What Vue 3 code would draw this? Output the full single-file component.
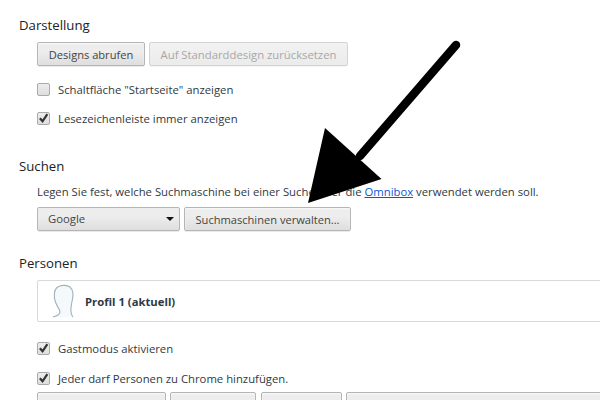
<template>
  <div class="page">
    <section class="sec first">
      <h3>Darstellung</h3>
      <div class="body">
        <div class="btns">
          <button class="btn b1">Designs abrufen</button>
          <button class="btn b2" disabled>Auf Standarddesign zurücksetzen</button>
        </div>
        <label class="chk r1"><span class="box"></span>Schaltfläche "Startseite" anzeigen</label>
        <label class="chk r2"><span class="box">
          <svg viewBox="0 0 12 12" width="12" height="12"><path d="M2 6.2 L5 9.6 L10.200 1.800" fill="none" stroke="#333" stroke-width="2.4"/></svg>
        </span>Lesezeichenleiste immer anzeigen</label>
      </div>
    </section>
    <section class="sec s2">
      <h3>Suchen</h3>
      <div class="body">
        <p class="desc">Legen Sie fest, welche Suchmaschine bei einer Suche über die <a href="#">Omnibox</a> verwendet werden soll.</p>
        <div class="btns">
          <div class="select">Google<span class="caret"></span></div>
          <button class="btn b3">Suchmaschinen verwalten...</button>
        </div>
      </div>
    </section>
    <section class="sec s3">
      <h3>Personen</h3>
      <div class="body">
        <div class="profile">
          <svg class="avatar" viewBox="0 0 22 34" width="22" height="34">
            <path d="M1 33 C4 32 8 31 8 28 C8 25 5 23 3.500 18 C1.500 12 2 6 5 3.500 C8 1 15 0.500 18 3 C21 5.500 21.500 11 20.500 15 C19.500 20 18.500 24 19 28 C19.300 30 20 32 21 33 Z" fill="#f5f9fb" stroke="none"/>
            <path d="M1 33 C4 32 8 31 8 28 C8 25 5 23 3.500 18 C1.500 12 2 6 5 3.500 C8 1 15 0.500 18 3 C21 5.500 21.500 11 20.500 15 C19.500 20 18.500 24 19 28 C19.300 30 20 32 21 33" fill="none" stroke="#9db2bd" stroke-width="1.100"/>
          </svg>
          <b>Profil 1 (aktuell)</b>
        </div>
        <label class="chk r3"><span class="box">
          <svg viewBox="0 0 12 12" width="12" height="12"><path d="M2 6.2 L5 9.6 L10.200 1.800" fill="none" stroke="#333" stroke-width="2.4"/></svg>
        </span>Gastmodus aktivieren</label>
        <label class="chk r4"><span class="box">
          <svg viewBox="0 0 12 12" width="12" height="12"><path d="M2 6.2 L5 9.6 L10.200 1.800" fill="none" stroke="#333" stroke-width="2.4"/></svg>
        </span>Jeder darf Personen zu Chrome hinzufügen.</label>
        <div class="btns last">
          <button class="btn w1"></button>
          <button class="btn w2"></button>
          <button class="btn w3"></button>
          <button class="btn w4"></button>
        </div>
      </div>
    </section>
    <svg class="arrow" viewBox="0 0 600 400" width="600" height="400">
      <path d="M456 45 L360 156" stroke="#000" stroke-width="8.500" stroke-linecap="round" fill="none"/>
      <path d="M325 128 L381.500 179 L308 203 Z" fill="#000"/>
    </svg>
  </div>
</template>

<script setup>
</script>

<style>
html, body { margin: 0; background: #fff; }
</style>

<style scoped>
.page {
  position: relative;
  width: 600px;
  height: 400px;
  overflow: hidden;
  background: #fff;
  font-family: "Open Sans", "Noto Sans", sans-serif;
  font-size: 11.3px;
  color: #303942;
  box-sizing: border-box;
  padding-left: 19px;
}
.sec { margin: 0; }
.first { padding-top: 16px; }
.s2 { margin-top: 30px; }
.s3 { margin-top: 23px; }
h3 {
  margin: 0;
  font-size: 13.2px;
  line-height: 18px;
  font-weight: 400;
  color: #222;
}
.body { padding-left: 18px; }
.btns { display: flex; gap: 4px; }
.first .btns { margin-top: 8px; }
.btn {
  box-sizing: border-box;
  height: 24px;
  padding: 0;
  font-family: inherit;
  font-size: 11.1px;
  color: #444;
  border: 1px solid #b5b5b5;
  border-radius: 2px;
  background: linear-gradient(#ededed, #ededed 40%, #dedede);
  box-shadow: 0 1px 0 rgba(0,0,0,.08), inset 0 1px 2px rgba(255,255,255,.75);
}
.b1 { width: 108px; }
.b2 { width: 199px; font-size: 11.3px; color: #a8a8a8; border-color: #d4d4d4; background: linear-gradient(#f2f2f2, #ebebeb); box-shadow: 0 1px 0 rgba(0,0,0,.04); }
.b3 { width: 167px; }
.chk { display: flex; align-items: center; height: 18px; }
.r1 { margin-top: 14px; }
.r2 { margin-top: 11px; }
.r3 { margin-top: 17px; }
.r4 { margin-top: 12px; }
.box {
  box-sizing: border-box;
  width: 13px;
  height: 13px;
  margin-right: 8px;
  border: 1px solid #aaa;
  border-radius: 2px;
  background: linear-gradient(#ededed, #dedede);
  display: flex;
  align-items: center;
  justify-content: center;
}
.desc { margin: 8px 0 0; line-height: 18px; white-space: nowrap; }
a { color: #15c; }
.s2 .btns { margin-top: 6px; }
.select {
  box-sizing: border-box;
  position: relative;
  width: 143px;
  height: 24px;
  line-height: 22px;
  padding-left: 10px;
  color: #444;
  border: 1px solid #b5b5b5;
  border-radius: 2px;
  background: linear-gradient(#ededed, #ededed 40%, #dedede);
  box-shadow: 0 1px 0 rgba(0,0,0,.08);
}
.caret {
  position: absolute;
  right: 5px;
  top: 9px;
  border-left: 4px solid transparent;
  border-right: 4px solid transparent;
  border-top: 4px solid #111;
}
.profile {
  margin-top: 8px;
  box-sizing: border-box;
  width: 600px;
  height: 42px;
  border: 1px solid #d9d9d9;
  border-radius: 2px;
  display: flex;
  align-items: center;
  padding-left: 14px;
}
.avatar { flex: none; margin-right: 11px; }
.profile b { font-weight: 700; color: #303942; }
.last { margin-top: 5px; gap: 4px; }
.w1 { width: 129px; flex: none; }
.w2 { width: 86px; flex: none; }
.w3 { width: 81px; flex: none; margin-left: 1px; }
.w4 { width: 300px; flex: none; }
.arrow { position: absolute; left: 0; top: 0; pointer-events: none; }
</style>
